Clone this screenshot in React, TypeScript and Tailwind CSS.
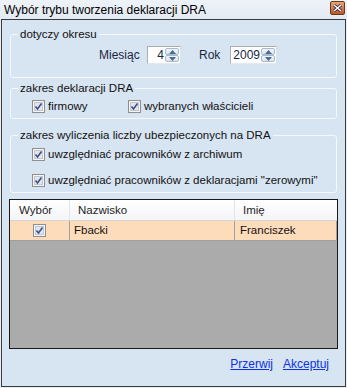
import type { ReactNode } from "react";

// Win7-style dialog: "Wybór trybu tworzenia deklaracji DRA"

function CheckBox() {
  return (
    <svg width="13" height="13" viewBox="0 0 13 13" className="shrink-0">
      <rect x="0.5" y="0.5" width="12" height="12" fill="#f4f4f4" stroke="#8f8f8f" />
      <rect x="2.5" y="2.5" width="8" height="8" fill="#e2e6ec" stroke="#c3c8d0" />
      <path d="M3.5 6.5 L5.5 9 L9.5 3.5" fill="none" stroke="#3b4f8c" strokeWidth="1.6" />
    </svg>
  );
}

function CheckRow({ label }: { label: string }) {
  return (
    <label className="flex items-center gap-[3px] h-[15px] whitespace-nowrap">
      <CheckBox />
      <span>{label}</span>
    </label>
  );
}

function Spinner({ value, width }: { value: string; width: string }) {
  return (
    <div className={`flex h-[18px] ${width} border border-[#abadb3] border-b-[#e3e9ef] border-r-[#dbdfe6] bg-white`}>
      <div className="flex-1 text-right pr-[1px] leading-[16px]">{value}</div>
      <div className="flex flex-col w-[15px] py-px pr-px">
        <div className="flex-1 flex items-center justify-center border border-[#a9b9cc] rounded-[2px] bg-gradient-to-b from-[#f2f6fa] to-[#d9e4f0]">
          <svg width="7" height="4" viewBox="0 0 7 4">
            <path d="M0 4 L3.5 0 L7 4 Z" fill="#4d6a92" />
          </svg>
        </div>
        <div className="flex-1 flex items-center justify-center border border-[#a9b9cc] rounded-[2px] bg-gradient-to-b from-[#f2f6fa] to-[#d9e4f0]">
          <svg width="7" height="4" viewBox="0 0 7 4">
            <path d="M0 0 L3.5 4 L7 0 Z" fill="#4d6a92" />
          </svg>
        </div>
      </div>
    </div>
  );
}

function GroupBox({ title, className, children }: { title: string; className?: string; children: ReactNode }) {
  return (
    <fieldset className={`border border-[#f6f9fc] rounded-[3px] mx-[8px] pl-[21px] pr-[4px] ${className ?? ""}`}>
      <legend className="ml-[-14px] px-[2px] leading-[12px] whitespace-nowrap">{title}</legend>
      {children}
    </fieldset>
  );
}

export default function App() {
  return (
    <div
      className="w-[347px] h-[388px] flex flex-col bg-[#e8eef5] text-[11.5px] text-[#111]"
      style={{ fontFamily: '"Liberation Sans", Arial, sans-serif' }}
    >
      {/* title bar */}
      <div className="h-[19px] flex items-start bg-gradient-to-b from-[#eef3f8] to-[#e3eaf3]">
        <div className="flex-1 pl-[4px] pt-[3px] text-[12px] leading-[14px] text-black">
          Wybór trybu tworzenia deklaracji DRA
        </div>
        <div className="mt-[1px] mr-[2px] w-[15px] h-[14px] rounded-[2px] border border-[#6b3818] bg-gradient-to-b from-[#e6a877] to-[#b85a22] flex items-center justify-center">
          <svg width="9" height="8" viewBox="0 0 9 8">
            <path d="M1 1 L8 7 M8 1 L1 7" stroke="#3a2350" strokeWidth="3" />
            <path d="M1 1 L8 7 M8 1 L1 7" stroke="#ffffff" strokeWidth="1.5" />
          </svg>
        </div>
      </div>

      {/* client area */}
      <div className="flex-1 mx-px mb-px border border-[#3a3a3a] bg-[#d7e4f2] flex flex-col pt-[8px]">
        <GroupBox title="dotyczy okresu" className="pt-[6px] pb-[13px]">
          <div className="flex items-center pl-[67px] text-[12px] text-[#1b2740]">
            <span className="w-[48px]">Miesiąc</span>
            <Spinner value="4" width="w-[34px]" />
            <span className="ml-[18px] w-[31px]">Rok</span>
            <Spinner value="2009" width="w-[47px]" />
          </div>
        </GroupBox>

        <GroupBox title="zakres deklaracji DRA" className="mt-[4px] pt-[5px] pb-[4px]">
          <div className="flex items-center">
            <div className="w-[96px]">
              <CheckRow label="firmowy" />
            </div>
            <CheckRow label="wybranych właścicieli" />
          </div>
        </GroupBox>

        <GroupBox title="zakres wyliczenia liczby ubezpieczonych na DRA" className="mt-[10px] pt-[6px] pb-[4px]">
          <div className="flex flex-col gap-[11px]">
            <CheckRow label="uwzględniać pracowników z archiwum" />
            <CheckRow label='uwzględniać pracowników z deklaracjami "zerowymi"' />
          </div>
        </GroupBox>

        {/* grid */}
        <div className="mt-[6px] mx-[7px] h-[150px] border border-[#1a1a1a] bg-[#ababab] flex flex-col">
          <div className="flex h-[21px] bg-gradient-to-b from-white to-[#f4f5f7] border-b border-[#d5d5d5] text-[#1e1e1e]">
            <div className="w-[60px] pl-[9px] leading-[20px] border-r border-[#e2e3e5]">Wybór</div>
            <div className="w-[165px] pl-[8px] leading-[20px] border-r border-[#e2e3e5]">Nazwisko</div>
            <div className="flex-1 pl-[8px] leading-[20px]">Imię</div>
          </div>
          <div className="flex h-[20px] bg-[#fddcbc] border-b border-[#a0a0a0]">
            <div className="w-[60px] flex items-center justify-center border-r border-[#a0a0a0]">
              <CheckBox />
            </div>
            <div className="w-[165px] pl-[4px] leading-[19px] border-r border-[#a0a0a0]">Fbacki</div>
            <div className="flex-1 pl-[5px] leading-[19px] border-r border-[#a0a0a0]">Franciszek</div>
          </div>
        </div>

        {/* links */}
        <div className="mt-[8px] flex justify-end gap-[10px] pr-[16px] text-[12px] leading-[14px]">
          <a className="text-[#0b33e6] underline cursor-pointer">Przerwij</a>
          <a className="text-[#0b33e6] underline cursor-pointer">Akceptuj</a>
        </div>
      </div>
    </div>
  );
}
